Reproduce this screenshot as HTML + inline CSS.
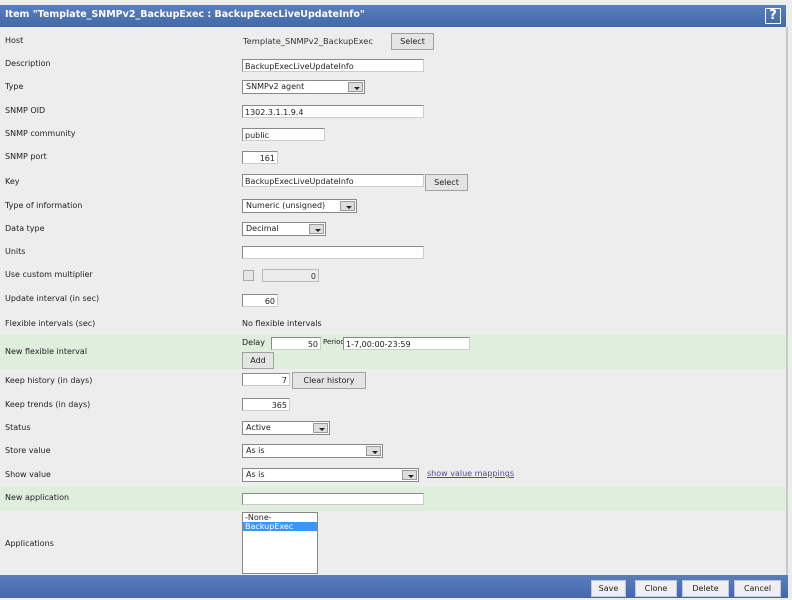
<!DOCTYPE html>
<html><head><meta charset="utf-8"><style>
*{box-sizing:border-box;margin:0;padding:0}
body{width:792px;height:600px;background:#ededed;font-family:"DejaVu Sans","Liberation Sans",sans-serif;font-size:8px;color:#222;position:relative;overflow:hidden}
.a{position:absolute;white-space:nowrap}
.l{position:absolute;left:5px;white-space:nowrap}
.i{position:absolute;background:#fff;border:1px solid #8a8a8a;border-right-color:#ccc;border-bottom-color:#ccc;height:13px;font-size:8px;line-height:14px;padding:0 2px;overflow:hidden}
.r{text-align:right}
.s{position:absolute;background:#fff;border:1px solid #888;height:14px;font-size:8px;line-height:12px;padding-left:3px}
.s b{position:absolute;right:1px;top:1px;width:15px;height:10px;background:#ddd;border:1px solid #999}
.s b:after{content:"";position:absolute;left:5px;top:4px;border:3px solid transparent;border-top:3px solid #222;border-bottom:0}
.b{position:absolute;background:#e4e4e4;border:1px solid #a0a0a0;font-size:8px;text-align:center;line-height:15px;height:17px}
.g{position:absolute;left:0;width:786px;background:#dfeedd}
.fb{position:absolute;background:#efefef;border:1px solid #c0c8d8;font-size:8px;text-align:center;line-height:15px;height:17px;top:580px}
</style></head><body>
<div class="a" style="left:0;top:5px;width:786px;height:22px;background:linear-gradient(#5a7fbd,#4468aa);"></div>
<div class="a" style="left:5px;top:9px;color:#fff;font-weight:bold;font-size:9.5px">Item "Template_SNMPv2_BackupExec : BackupExecLiveUpdateInfo"</div>
<div class="a" style="left:765px;top:8px;width:16px;height:16px;border:1px solid #fff;color:#fff;font-weight:bold;font-size:13px;line-height:14px;text-align:center">?</div>
<div class="a" style="left:786px;top:27px;width:2px;height:548px;background:#c8c8c8"></div>
<div class="g" style="top:335px;height:34px"></div>
<div class="g" style="top:487px;height:24px"></div>

<div class="l" style="top:36px">Host</div>
<div class="a" style="left:243px;top:36px;color:#333;font-size:8.3px">Template_SNMPv2_BackupExec</div>
<div class="b" style="left:391px;top:33px;width:43px">Select</div>
<div class="l" style="top:59px">Description</div>
<div class="i" style="left:242px;top:59px;width:182px">BackupExecLiveUpdateInfo</div>
<div class="l" style="top:82px">Type</div>
<div class="s" style="left:242px;top:80px;width:123px">SNMPv2 agent<b></b></div>
<div class="l" style="top:106px">SNMP OID</div>
<div class="i" style="left:242px;top:105px;width:182px">1302.3.1.1.9.4</div>
<div class="l" style="top:129px">SNMP community</div>
<div class="i" style="left:242px;top:128px;width:83px">public</div>
<div class="l" style="top:152px">SNMP port</div>
<div class="i r" style="left:242px;top:151px;width:36px">161</div>
<div class="l" style="top:177px">Key</div>
<div class="i" style="left:242px;top:174px;width:182px">BackupExecLiveUpdateInfo</div>
<div class="b" style="left:425px;top:174px;width:43px">Select</div>
<div class="l" style="top:201px">Type of information</div>
<div class="s" style="left:242px;top:199px;width:115px">Numeric (unsigned)<b></b></div>
<div class="l" style="top:224px">Data type</div>
<div class="s" style="left:242px;top:222px;width:84px">Decimal<b></b></div>
<div class="l" style="top:247px">Units</div>
<div class="i" style="left:242px;top:246px;width:182px"></div>
<div class="l" style="top:270px">Use custom multiplier</div>
<div class="a" style="left:243px;top:270px;width:11px;height:11px;border:1px solid #aaa;background:#e6e6e6"></div>
<div class="i r" style="left:262px;top:269px;width:57px;background:#ececec;border-color:#bbb;color:#333">0</div>
<div class="l" style="top:294px">Update interval (in sec)</div>
<div class="i r" style="left:242px;top:294px;width:36px">60</div>
<div class="l" style="top:319px">Flexible intervals (sec)</div>
<div class="a" style="left:242px;top:319px">No flexible intervals</div>
<div class="l" style="top:347px">New flexible interval</div>
<div class="a" style="left:242px;top:338px">Delay</div>
<div class="i r" style="left:271px;top:337px;width:50px">50</div>
<div class="a" style="left:323px;top:338px;font-size:7px">Period</div>
<div class="i" style="left:343px;top:337px;width:127px">1-7,00:00-23:59</div>
<div class="b" style="left:242px;top:352px;width:32px">Add</div>
<div class="l" style="top:376px">Keep history (in days)</div>
<div class="i r" style="left:242px;top:373px;width:48px">7</div>
<div class="b" style="left:292px;top:372px;width:74px">Clear history</div>
<div class="l" style="top:400px">Keep trends (in days)</div>
<div class="i r" style="left:242px;top:398px;width:48px">365</div>
<div class="l" style="top:423px">Status</div>
<div class="s" style="left:242px;top:421px;width:88px">Active<b></b></div>
<div class="l" style="top:446px">Store value</div>
<div class="s" style="left:242px;top:444px;width:141px">As is<b></b></div>
<div class="l" style="top:470px">Show value</div>
<div class="s" style="left:242px;top:468px;width:177px">As is<b></b></div>
<div class="a" style="left:427px;top:469px;color:#4b4b9a;text-decoration:underline">show value mappings</div>
<div class="l" style="top:493px">New application</div>
<div class="i" style="left:242px;top:493px;width:182px;height:12px"></div>
<div class="l" style="top:539px">Applications</div>
<div class="a" style="left:242px;top:512px;width:76px;height:62px;background:#fff;border:1px solid #888">
<div style="padding-left:2px;line-height:9px">-None-</div>
<div style="padding-left:2px;line-height:9px;background:#3399ff;color:#fff">BackupExec</div></div>

<div class="a" style="left:0;top:575px;width:788px;height:23px;background:linear-gradient(#5a7fbd,#4468aa)"></div>
<div class="fb" style="left:591px;width:35px">Save</div>
<div class="fb" style="left:635px;width:42px">Clone</div>
<div class="fb" style="left:682px;width:47px">Delete</div>
<div class="fb" style="left:734px;width:47px">Cancel</div>
</body></html>
